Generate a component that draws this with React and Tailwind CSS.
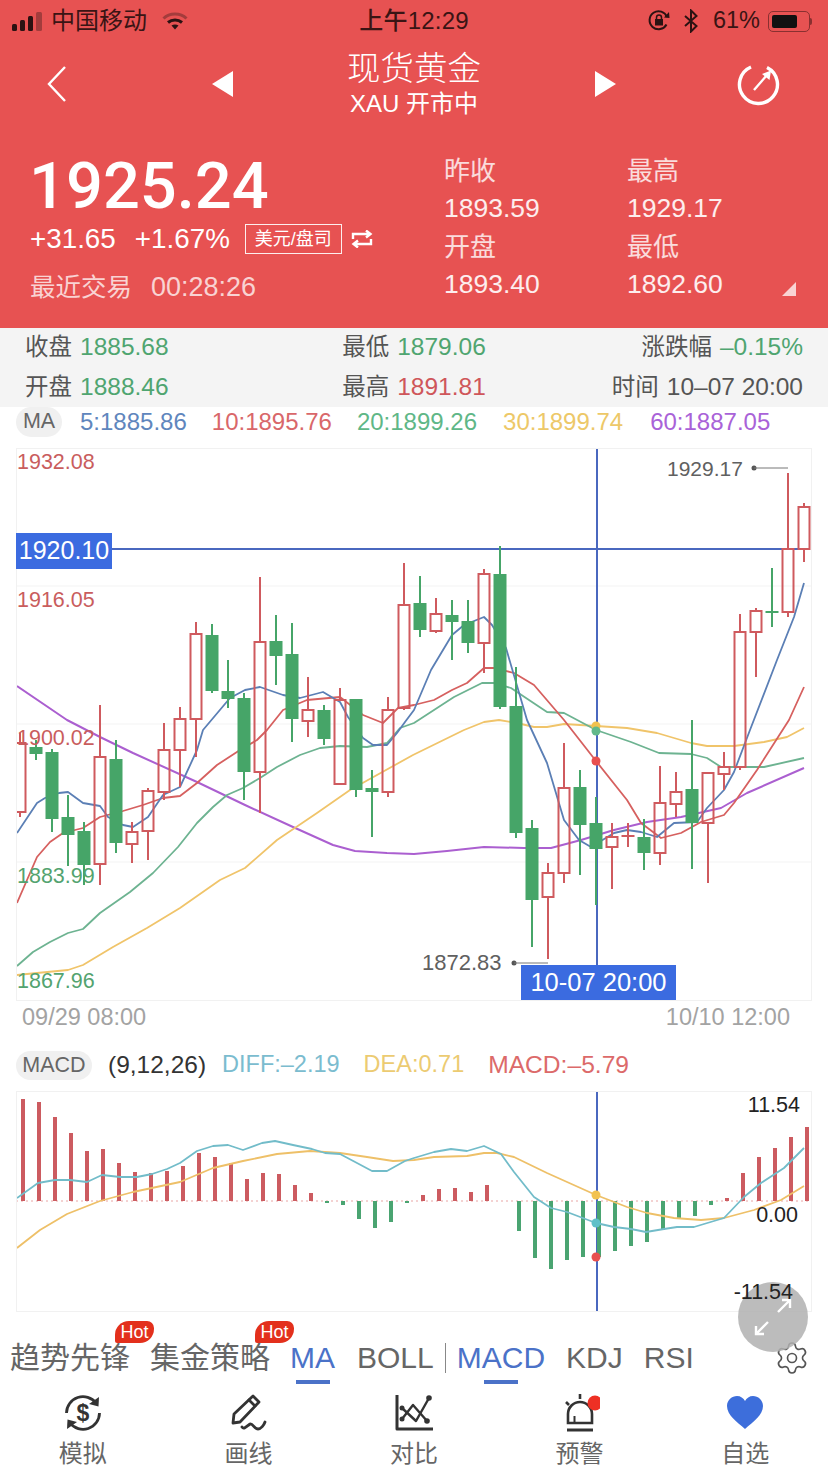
import { Settings } from "lucide-react";

const RED = "#cf5a5e";
const GREEN = "#46a568";
const BLUE = "#4a68bf";

// [x, high, top, bottom, low, color]
const candles = [
    [20, 733, 743, 812, 817, "r"],
    [36, 740, 747, 754, 760, "g"],
    [52, 749, 752, 819, 832, "g"],
    [68, 795, 817, 835, 866, "g"],
    [84, 822, 831, 865, 885, "g"],
    [100, 705, 757, 864, 885, "r"],
    [116, 740, 759, 843, 853, "g"],
    [132, 822, 832, 844, 863, "r"],
    [148, 788, 791, 831, 860, "r"],
    [164, 723, 750, 792, 800, "r"],
    [180, 707, 719, 750, 787, "r"],
    [196, 622, 634, 719, 757, "r"],
    [212, 624, 635, 691, 693, "g"],
    [228, 660, 691, 699, 708, "g"],
    [244, 693, 698, 772, 800, "g"],
    [260, 577, 642, 772, 813, "r"],
    [276, 615, 641, 656, 685, "g"],
    [292, 623, 654, 719, 742, "g"],
    [308, 677, 710, 721, 737, "r"],
    [324, 705, 710, 739, 745, "g"],
    [340, 688, 700, 784, 784, "r"],
    [356, 699, 699, 790, 797, "g"],
    [372, 770, 788, 792, 837, "g"],
    [388, 697, 710, 792, 797, "r"],
    [404, 563, 605, 708, 710, "r"],
    [420, 576, 603, 630, 637, "g"],
    [436, 598, 614, 631, 633, "r"],
    [452, 600, 615, 622, 660, "g"],
    [468, 600, 621, 643, 653, "g"],
    [484, 569, 574, 643, 673, "r"],
    [500, 546, 574, 707, 709, "g"],
    [516, 667, 706, 833, 838, "g"],
    [532, 820, 828, 900, 947, "g"],
    [548, 863, 873, 897, 959, "r"],
    [564, 743, 788, 873, 883, "r"],
    [580, 770, 787, 825, 875, "g"],
    [596, 797, 823, 849, 905, "g"],
    [612, 823, 837, 847, 889, "r"],
    [628, 823, 836, 836, 847, "r"],
    [644, 819, 837, 853, 870, "g"],
    [660, 766, 803, 853, 865, "r"],
    [676, 772, 792, 804, 817, "r"],
    [692, 720, 789, 823, 869, "g"],
    [708, 773, 773, 823, 883, "r"],
    [724, 752, 767, 774, 790, "r"],
    [740, 614, 632, 767, 770, "r"],
    [756, 608, 611, 632, 677, "r"],
    [772, 568, 612, 612, 627, "g"],
    [788, 473, 549, 612, 617, "r"],
    [804, 503, 507, 549, 562, "r"],
];

const ma5 = "17,833 37,803 45,798 59,793 68,792 83,803 100,806 108,817 123,825 133,827 148,817 163,795 180,787 197,750 203,730 230,698 245,690 260,687 283,695 300,698 323,692 340,702 348,717 363,738 373,745 387,745 397,733 405,722 414,710 431,670 452,635 464,625 484,617 492,625 506,648 527,720 547,763 564,820 579,840 591,847 614,833 627,830 641,832 657,837 674,823 697,822 707,808 724,790 734,772 750,730 777,660 794,617 804,583";
const ma10 = "17,903 27,880 37,857 50,842 63,833 83,828 100,817 123,811 143,805 163,798 180,796 197,783 217,765 240,750 257,740 267,730 283,710 307,700 340,697 363,715 383,723 398,708 414,705 434,700 452,690 467,683 484,668 494,668 514,673 534,685 564,720 596,761 627,800 641,823 661,838 681,833 701,822 724,815 734,803 757,770 789,720 804,687";
const ma20 = "17,966 33,952 50,942 68,933 83,929 100,913 130,892 153,873 178,847 197,823 213,807 227,795 243,788 260,778 277,767 300,755 320,748 340,746 367,747 387,743 400,728 414,723 454,697 482,683 494,683 511,688 547,712 564,713 596,730 631,742 659,753 691,754 707,758 721,767 764,767 804,758";
const ma30 = "17,975 37,973 68,970 83,965 113,947 147,928 180,908 220,880 245,868 277,840 317,813 350,790 413,755 464,730 484,722 499,720 517,723 534,727 547,727 564,724 596,726 627,728 657,733 691,743 707,746 734,746 764,742 787,737 804,728";
const ma60 = "17,686 67,720 100,737 133,753 197,782 245,805 293,827 333,845 355,851 387,853 414,854 447,851 484,847 524,848 551,848 581,840 614,830 647,822 681,817 721,808 747,793 804,768";

// [x, y end of bar] measured from the zero line at 1201
const macdBars = [
    [23, 1099], [39, 1102], [55, 1117], [71, 1133], [87, 1151], [103, 1149], [119, 1163], [135, 1172],
    [151, 1173], [167, 1171], [183, 1166], [199, 1153], [215, 1157], [231, 1163], [247, 1179], [263, 1173],
    [279, 1174], [295, 1185], [311, 1193], [327, 1203], [343, 1205], [359, 1219], [375, 1228], [391, 1222],
    [407, 1203], [423, 1195], [439, 1189], [455, 1188], [471, 1192], [487, 1185], [519, 1231], [535, 1258],
    [551, 1269], [567, 1260], [583, 1257], [599, 1257], [615, 1251], [631, 1246], [647, 1242], [663, 1230],
    [679, 1219], [695, 1216], [711, 1205], [727, 1198], [743, 1173], [759, 1157], [775, 1148], [791, 1137],
    [807, 1127],
];

const diff = "17,1198 38,1183 55,1180 70,1180 87,1182 102,1175 120,1177 137,1177 152,1174 167,1169 180,1163 197,1151 213,1146 228,1145 243,1150 262,1143 275,1141 293,1145 312,1149 325,1153 340,1154 357,1163 372,1171 387,1171 405,1161 414,1158 434,1152 451,1149 467,1151 484,1146 501,1154 514,1172 534,1197 551,1208 567,1212 596,1223 614,1227 631,1229 646,1232 664,1229 677,1227 694,1227 724,1218 744,1197 761,1183 784,1168 804,1148";
const dea = "17,1248 40,1230 67,1214 100,1201 133,1192 180,1182 213,1168 243,1161 277,1154 310,1151 340,1153 367,1157 393,1161 414,1160 434,1157 467,1156 484,1153 497,1153 514,1157 547,1173 596,1195 627,1207 647,1213 674,1218 701,1220 724,1218 754,1210 781,1200 804,1186";

const Line = ({ points, color, width = 1.8 }) => (
    <polyline
        points={points}
        fill="none"
        stroke={color}
        strokeWidth={width}
        strokeLinejoin="round"
    />
);

const Candle = ({ x, high, top, bottom, low, color }) => {
    const c = color === "r" ? RED : GREEN;
    const flat = bottom - top < 3;
    return (
        <g>
            <line x1={x} x2={x} y1={high} y2={top} stroke={c} strokeWidth="2" />
            <line x1={x} x2={x} y1={bottom} y2={low} stroke={c} strokeWidth="2" />
            {flat ? (
                <line x1={x - 6.5} x2={x + 6.5} y1={top} y2={top} stroke={c} strokeWidth="2" />
            ) : color === "r" ? (
                <rect x={x - 5.5} y={top} width="11" height={bottom - top} fill="none" stroke={c} strokeWidth="2" />
            ) : (
                <rect x={x - 6.5} y={top} width="13" height={bottom - top} fill={c} />
            )}
        </g>
    );
};

const StatusBar = () => (
    <div className="grid grid-cols-3 items-center h-[42px] text-[#3a1414] text-[24px]">
        <div className="flex items-center pl-3">
            <svg width="32" height="20" viewBox="0 0 32 20" fill="#2b1212">
                <rect x="0" y="13" width="5" height="7" rx="1.5" />
                <rect x="8" y="9" width="5" height="11" rx="1.5" />
                <rect x="16" y="5" width="5" height="15" rx="1.5" />
                <rect x="24" y="1" width="6" height="19" rx="1.5" fill="#a33c3c" />
            </svg>
            <span className="ml-[7px]">中国移动</span>
            <svg className="ml-[15px]" width="26" height="20" viewBox="0 0 26 20" fill="none">
                <path d="M1.5 7.5C7.5 1.5 18.5 1.5 24.5 7.5" stroke="#a33c3c" strokeWidth="3" />
                <path d="M6 11.5C10 8 16 8 20 11.5" stroke="#2b1212" strokeWidth="3" />
                <path d="M9.5 14.5L13 18.5L16.5 14.5C14.5 13 11.5 13 9.5 14.5Z" fill="#2b1212" />
            </svg>
        </div>
        <div className="text-center font-medium tracking-[0.2px]">上午12:29</div>
        <div className="flex items-center justify-end pr-4">
            <svg width="24" height="24" viewBox="0 0 24 24" fill="none" stroke="#2b1212" strokeWidth="2">
                <path d="M19.5 15.5A9 9 0 1 1 20 8" />
                <path d="M17 8.5L22.5 9L22 3" fill="#2b1212" stroke="none" />
                <rect x="8" y="10" width="8" height="6.5" fill="#2b1212" stroke="none" />
                <path d="M9.5 10V8.5a2.5 2.5 0 0 1 5 0V10" strokeWidth="1.5" />
            </svg>
            <svg className="ml-[12px]" width="16" height="24" viewBox="0 0 16 24" fill="none" stroke="#2b1212" strokeWidth="2">
                <path d="M2 7L13.5 17L8 22.5V1.5L13.5 7L2 17" />
            </svg>
            <span className="ml-[14px] text-[23.5px]">61%</span>
            <div className="flex items-center ml-[8px]">
                <div className="w-[42px] h-[21px] rounded-[5px] border border-[#8a3030] p-[3px]">
                    <div className="w-[25px] h-full rounded-[2px] bg-[#111]" />
                </div>
                <div className="w-[2px] h-[7px] bg-[#8a3030] rounded-r" />
            </div>
        </div>
    </div>
);

const NavBar = () => (
    <div className="flex items-center h-[84px] text-white">
        <div className="w-[212px] pl-[45px]">
            <svg width="24" height="38" viewBox="0 0 24 38" fill="none" stroke="#fff" strokeWidth="2.4">
                <path d="M20 2L4 19L20 36" />
            </svg>
        </div>
        <svg width="21" height="26" viewBox="0 0 21 26" fill="#fff">
            <path d="M21 0V26L0 13Z" />
        </svg>
        <div className="w-[362px] text-center">
            <div className="text-[33.5px] leading-[40px] font-light">现货黄金</div>
            <div className="text-[24px] leading-[30px]">XAU 开市中</div>
        </div>
        <svg width="21" height="26" viewBox="0 0 21 26" fill="#fff">
            <path d="M0 0V26L21 13Z" />
        </svg>
        <svg className="ml-[121px]" width="44" height="44" viewBox="0 0 44 44" fill="none" stroke="#fff" strokeWidth="3.4">
            <path d="M30 5.5A19 19 0 1 1 14 5" />
            <path d="M17 28L30 13" strokeWidth="2.4" />
            <path d="M25 12L34 8.5L32.5 18Z" fill="#fff" stroke="none" />
        </svg>
    </div>
);

const QuoteStat = ({ label, value }) => (
    <div>
        <div className="h-[38px] flex items-center text-[26px] text-white/80">{label}</div>
        <div className="h-[38px] flex items-center text-[26.5px] text-white/90">{value}</div>
    </div>
);

const Quote = () => (
    <div className="relative flex h-[202px] text-white">
        <div className="w-[444px] pl-[30px]">
            <div className="mt-[30px] h-[60px] flex items-center text-[65px] leading-none font-medium font-['Roboto',sans-serif] -ml-[1px]">
                1925.24
            </div>
            <div className="mt-[8px] h-[30px] flex items-center text-[27.8px]">
                <span>+31.65</span>
                <span className="ml-[19px]">+1.67%</span>
                <span className="ml-[15px] w-[97px] h-[30px] flex items-center justify-center border border-white/90 text-[18px]">
                    美元/盘司
                </span>
                <svg className="ml-[9px]" width="22" height="18" viewBox="0 0 22 18" fill="none" stroke="#fff" strokeWidth="2.4">
                    <path d="M2 9V4H19M15 0.5L19.5 4L15 7.5" />
                    <path d="M20 9V14H3M7 10.5L2.5 14L7 17.5" />
                </svg>
            </div>
            <div className="mt-[18px] h-[30px] flex items-center text-white/75">
                <span className="text-[25.5px]">最近交易</span>
                <span className="ml-[19px] text-[27px]">00:28:26</span>
            </div>
        </div>
        <div className="grid grid-cols-[183px_1fr] mt-[26px] content-start">
            <QuoteStat label="昨收" value="1893.59" />
            <QuoteStat label="最高" value="1929.17" />
            <QuoteStat label="开盘" value="1893.40" />
            <QuoteStat label="最低" value="1892.60" />
        </div>
        <svg className="absolute right-[32px] bottom-[32px]" width="14" height="14" viewBox="0 0 14 14" fill="#fff" fillOpacity="0.75">
            <path d="M14 0V14H0Z" />
        </svg>
    </div>
);

const Stat = ({ label, value, color, className = "" }) => (
    <div className={`flex items-center gap-[8px] ${className}`}>
        <span className="text-[23.5px] text-[#555]">{label}</span>
        <span className={`text-[24.5px] ${color}`}>{value}</span>
    </div>
);

const InfoBand = () => (
    <div className="grid grid-cols-3 grid-rows-2 h-[79px] px-[25px] bg-[#f4f4f4]">
        <Stat label="收盘" value="1885.68" color="text-[#4fa570]" />
        <Stat label="最低" value="1879.06" color="text-[#4fa570]" className="justify-center" />
        <Stat label="涨跌幅" value="–0.15%" color="text-[#4fa570]" className="justify-end" />
        <Stat label="开盘" value="1888.46" color="text-[#4fa570]" />
        <Stat label="最高" value="1891.81" color="text-[#cf565a]" className="justify-center" />
        <Stat label="时间" value="10–07 20:00" color="text-[#555]" className="justify-end" />
    </div>
);

const MaLegend = () => (
    <div className="flex items-center h-[41px] pl-4 pb-[12px] text-[24px]">
        <span className="w-[46px] h-[30px] flex items-center justify-center rounded-full bg-[#f0f0f0] text-[#666] text-[21.5px]">
            MA
        </span>
        <span className="ml-[18px] text-[#5f86bd]">5:1885.86</span>
        <span className="ml-[25px] text-[#d9676a]">10:1895.76</span>
        <span className="ml-[25px] text-[#5fb787]">20:1899.26</span>
        <span className="ml-[26px] text-[#edc868]">30:1899.74</span>
        <span className="ml-[27px] text-[#a962d8]">60:1887.05</span>
    </div>
);

const AxisLabel = ({ top, color, children }) => (
    <span className={`absolute left-0 text-[21.5px] leading-[26px] ${color}`} style={{ top }}>
        {children}
    </span>
);

const KLineChart = () => (
    <div className="relative mx-4 h-[553px] border border-[#f1f1f1]">
        <svg className="absolute inset-0" width="794" height="551" viewBox="17 449 794 551">
            <g stroke="#f3f3f3" strokeWidth="1">
                <line x1="16" x2="812" y1="586" y2="586" />
                <line x1="16" x2="812" y1="724" y2="724" />
                <line x1="16" x2="812" y1="862" y2="862" />
            </g>
            <line x1="597" x2="597" y1="448" y2="966" stroke={BLUE} strokeWidth="2" />
            <line x1="112" x2="810" y1="549" y2="549" stroke={BLUE} strokeWidth="2" />
            <Line points={ma60} color="#ab5fd0" width="2" />
            <Line points={ma30} color="#f0c46a" />
            <Line points={ma20} color="#6db391" />
            <Line points={ma10} color="#d6605f" />
            <Line points={ma5} color="#5b7fb5" />
            {candles.map(([x, high, top, bottom, low, color]) => (
                <Candle key={x} x={x} high={high} top={top} bottom={bottom} low={low} color={color} />
            ))}
            <circle cx="596" cy="726" r="4.5" fill="#f2c24f" />
            <circle cx="596" cy="731" r="4.5" fill="#62b98b" />
            <circle cx="596" cy="761" r="4.5" fill="#e8504f" />
            <circle cx="754" cy="468" r="2.5" fill="#555" />
            <line x1="754" x2="788" y1="468" y2="468" stroke="#777" strokeWidth="1" />
            <circle cx="514" cy="963" r="2.5" fill="#555" />
            <line x1="514" x2="548" y1="963" y2="963" stroke="#777" strokeWidth="1" />
        </svg>
        <AxisLabel top={0} color="text-[#c95d5d]">1932.08</AxisLabel>
        <AxisLabel top={138} color="text-[#c95d5d]">1916.05</AxisLabel>
        <AxisLabel top={276} color="text-[#c95d5d]">1900.02</AxisLabel>
        <AxisLabel top={414} color="text-[#53a36f]">1883.99</AxisLabel>
        <AxisLabel top={519} color="text-[#53a36f]">1867.96</AxisLabel>
        <span className="absolute -left-[1px] top-[84px] w-[96px] h-[36px] flex items-center justify-center bg-[#3b6be0] text-white text-[25px]">
            1920.10
        </span>
        <span className="absolute left-[650px] top-[7px] text-[21px] leading-[26px] text-[#606060]">1929.17</span>
        <span className="absolute left-[405px] top-[501px] text-[22px] leading-[26px] text-[#606060]">1872.83</span>
        <span className="absolute left-[504px] bottom-0 w-[155px] h-[35px] flex items-center justify-center bg-[#3b6be0] text-white text-[25.5px]">
            10-07 20:00
        </span>
    </div>
);

const MacdLegend = () => (
    <div className="flex items-center h-[30px] mt-[19px] pl-4 text-[23.5px]">
        <span className="w-[76px] h-[29px] flex items-center justify-center rounded-full bg-[#f0f0f0] text-[#666] text-[21.5px]">
            MACD
        </span>
        <span className="ml-[16px] text-[#333] text-[24.5px]">(9,12,26)</span>
        <span className="ml-[16px] text-[#7bbccf]">DIFF:–2.19</span>
        <span className="ml-[24px] text-[#eccb72]">DEA:0.71</span>
        <span className="ml-[24px] text-[#dc6a6a] text-[24.6px]">MACD:–5.79</span>
    </div>
);

const MacdChart = () => (
    <div className="relative mx-4 mt-[11px] h-[221px] border border-[#f1f1f1]">
        <svg className="absolute inset-0" width="794" height="219" viewBox="17 1092 794 219">
            <line x1="16" x2="812" y1="1201" y2="1201" stroke="#e9a5a5" strokeWidth="1" strokeDasharray="2 3" />
            <line x1="597" x2="597" y1="1091" y2="1311" stroke={BLUE} strokeWidth="2" />
            {macdBars.map(([x, end]) => (
                <rect
                    key={x}
                    x={x - 2}
                    y={Math.min(end, 1201)}
                    width="4"
                    height={Math.abs(end - 1201)}
                    fill={end < 1201 ? "#cc5b60" : "#4aa471"}
                />
            ))}
            <Line points={dea} color="#eec068" />
            <Line points={diff} color="#72bcc9" />
            <circle cx="596" cy="1195" r="4.5" fill="#f2c24f" />
            <circle cx="596" cy="1223" r="4.5" fill="#5fc0c8" />
            <circle cx="596" cy="1257" r="4.5" fill="#e8504f" />
        </svg>
        <span className="absolute right-[11px] top-[0px] text-[21.5px] leading-[26px] text-[#222]">11.54</span>
        <span className="absolute right-[13px] top-[110px] text-[21.5px] leading-[26px] text-[#222]">0.00</span>
        <span className="absolute z-10 right-[18px] top-[187px] text-[21.5px] leading-[26px] text-[#222]">-11.54</span>
    </div>
);

const HotBadge = () => (
    <span className="absolute -top-[14px] -right-[24px] w-[39px] h-[22px] flex items-center justify-center bg-[#e3301c] rounded-tl-[14px] rounded-tr-[7px] rounded-br-[14px] rounded-bl-[2px] text-white text-[18px] leading-none">
        Hot
    </span>
);

const Tab = ({ label, hot, active, className = "" }) => (
    <span className={`relative ${active ? "text-[#4b72c8]" : "text-[#666]"} ${className}`}>
        {label}
        {hot && <HotBadge />}
        {active && (
            <span className="absolute left-1/2 -translate-x-1/2 -bottom-[4px] w-[34px] h-[4px] bg-[#4b72c8]" />
        )}
    </span>
);

const Tabs = () => (
    <div className="flex items-center h-[45px] mt-[23px] mb-[12px] pl-[10px] pr-[18px] text-[30px] leading-[45px]">
        <Tab label="趋势先锋" hot />
        <Tab label="集金策略" hot className="ml-[20px]" />
        <Tab label="MA" active className="ml-[20px]" />
        <Tab label="BOLL" className="ml-[22px]" />
        <span className="ml-[11px] w-[1px] h-[30px] bg-[#888]" />
        <Tab label="MACD" active className="ml-[11px]" />
        <Tab label="KDJ" className="ml-[21px]" />
        <Tab label="RSI" className="ml-[21px]" />
        <Settings className="ml-auto" size={36} color="#555" strokeWidth={1.1} />
    </div>
);

const DollarIcon = () => (
    <svg width="40" height="40" viewBox="0 0 40 40" fill="none" stroke="#333" strokeWidth="2.8">
        <path d="M3.5 20A16.5 16.5 0 0 1 33 10" />
        <path d="M36.5 20A16.5 16.5 0 0 1 7 30" />
        <path d="M36 4L35.5 13.5L26 11Z" fill="#333" stroke="none" />
        <path d="M4 36L4.5 26.5L14 29Z" fill="#333" stroke="none" />
        <text x="20" y="28" textAnchor="middle" fontSize="23" fontWeight="700" fill="#333" stroke="none">$</text>
    </svg>
);

const PencilIcon = () => (
    <svg width="40" height="40" viewBox="0 0 40 40" fill="none" stroke="#333" strokeWidth="2.8" strokeLinejoin="round" strokeLinecap="round">
        <path d="M6 21L25 3L31 9L12 29L5 30Z" />
        <path d="M21 7L27 13" />
        <path d="M14 34C16 37 19 33 22 31C25 30 26 36 30 36C33 36 36 32 37 29" />
    </svg>
);

const CompareIcon = () => (
    <svg width="40" height="40" viewBox="0 0 40 40" fill="none" stroke="#333" strokeWidth="2.4" strokeLinejoin="round">
        <path d="M3 2V36H39" strokeWidth="3" />
        <path d="M8 26L19 12L33 28" />
        <path d="M8 15L22 28L35 5" />
        <circle cx="8" cy="26" r="2.5" fill="#333" stroke="none" />
        <circle cx="8" cy="15" r="2.5" fill="#333" stroke="none" />
        <circle cx="35" cy="5" r="2.8" fill="#333" stroke="none" />
        <circle cx="33" cy="28" r="2.8" fill="#333" stroke="none" />
    </svg>
);

const AlarmIcon = () => (
    <svg width="40" height="40" viewBox="0 0 40 40" fill="none" stroke="#333" strokeWidth="2.6">
        <path d="M8 30V21A12 12 0 0 1 32 21V30Z" />
        <path d="M14.5 30V23" strokeWidth="2" />
        <path d="M7 37H33" strokeWidth="3" />
        <path d="M20 1V6" />
        <path d="M6 9L9 12" />
        <circle cx="35" cy="10" r="7.5" fill="#ee3024" stroke="none" />
    </svg>
);

const HeartIcon = () => (
    <svg width="40" height="40" viewBox="0 0 40 40" fill="#3d6edb">
        <path d="M20 36C12 29 2 22 2 13C2 7 7 3 12 3C15.5 3 18.5 5 20 8C21.5 5 24.5 3 28 3C33 3 38 7 38 13C38 22 28 29 20 36Z" />
    </svg>
);

const navItems = [
    { label: "模拟", icon: DollarIcon },
    { label: "画线", icon: PencilIcon },
    { label: "对比", icon: CompareIcon },
    { label: "预警", icon: AlarmIcon },
    { label: "自选", icon: HeartIcon },
];

const BottomNav = () => (
    <div className="grid grid-cols-5 h-[80px]">
        {navItems.map(({ label, icon: Icon }) => (
            <div key={label} className="flex flex-col items-center pt-[1px]">
                <Icon />
                <span className="mt-[4px] text-[24px] leading-[34px] text-[#666]">{label}</span>
            </div>
        ))}
    </div>
);

const ZoomButton = () => (
    <div className="absolute left-[738px] top-[1282px] w-[70px] h-[70px] rounded-full bg-[#b0b0b0]/85 flex items-center justify-center">
        <svg width="50" height="50" viewBox="0 0 50 50" fill="none" stroke="#fff" strokeWidth="2.4">
            <path d="M30 20L42 8M34 8H42V16" />
            <path d="M20 30L8 42M8 34V42H16" />
        </svg>
    </div>
);

const App = () => (
    <div className="relative w-[828px] h-[1472px] overflow-hidden bg-white font-['Liberation_Sans','Noto_Sans_CJK_SC',sans-serif]">
        <div className="bg-[#e75252]">
            <StatusBar />
            <NavBar />
            <Quote />
        </div>
        <InfoBand />
        <MaLegend />
        <KLineChart />
        <div className="flex justify-between h-[30px] pt-[4px] items-center pl-[22px] pr-[38px] text-[23.5px] text-[#a3a3a3]">
            <span>09/29 08:00</span>
            <span>10/10 12:00</span>
        </div>
        <MacdLegend />
        <MacdChart />
        <Tabs />
        <BottomNav />
        <ZoomButton />
    </div>
);

export default App;
